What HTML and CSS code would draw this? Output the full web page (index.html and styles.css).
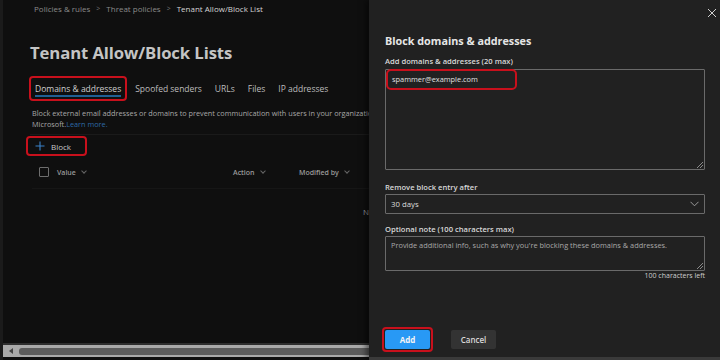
FILE: index.html
```html
<!DOCTYPE html>
<html>
<head>
<meta charset="utf-8">
<link rel="stylesheet" href="styles.css">
</head>
<body>
<div class="page">
  <div class="main">
    <div class="content">
      <div class="crumbs">
        <span>Policies &amp; rules</span><span class="sep">&gt;</span><span>Threat policies</span><span class="sep">&gt;</span><span class="cur">Tenant Allow/Block List</span>
      </div>
      <h1 class="title">Tenant Allow/Block Lists</h1>
      <div class="tabs">
        <div class="tab active"><span class="tab-label">Domains &amp; addresses</span></div>
        <div class="tab">Spoofed senders</div>
        <div class="tab">URLs</div>
        <div class="tab">Files</div>
        <div class="tab">IP addresses</div>
      </div>
      <p class="desc">Block external email addresses or domains to prevent communication with users in your organization and Microsoft.<br>Microsoft.<a class="link">Learn more.</a></p>
      <div class="toolbar">
        <div class="block-btn">
          <svg width="10" height="10" viewBox="0 0 10 10"><path d="M5 0.5V9.5M0.5 5H9.5" stroke="#3b82c9" stroke-width="1.1"/></svg>
          <span>Block</span>
        </div>
      </div>
      <div class="thead">
        <span class="check"></span>
        <span class="col c-value">Value <i class="chev"></i></span>
        <span class="col c-action">Action <i class="chev"></i></span>
        <span class="col c-mod">Modified by <i class="chev"></i></span>
      </div>
      <div class="empty-clip"><div class="empty">No items to show</div></div>
    </div>
    <div class="hscroll">
      <span class="arrow"></span>
      <span class="thumb"></span>
    </div>
  </div>
  <div class="panel">
    <div class="close">
      <svg width="10" height="10" viewBox="0 0 10 10"><path d="M1 1L9 9M9 1L1 9" stroke="#cfcfcf" stroke-width="1"/></svg>
    </div>
    <h2 class="ptitle">Block domains &amp; addresses</h2>
    <div class="label">Add domains &amp; addresses (20 max)</div>
    <div class="area big">
      <span class="entry">spammer@example.com</span>
      <span class="grip"></span>
    </div>
    <div class="label l2">Remove block entry after</div>
    <div class="select">
      <span>30 days</span>
      <svg width="9" height="6" viewBox="0 0 9 6"><path d="M0.5 0.8L4.5 4.8L8.5 0.8" stroke="#9a9a9a" stroke-width="1" fill="none"/></svg>
    </div>
    <div class="label l3">Optional note (100 characters max)</div>
    <div class="area note">
      <span class="ph">Provide additional info, such as why you're blocking these domains &amp; addresses.</span>
      <span class="grip"></span>
    </div>
    <div class="count">100 characters left</div>
    <div class="footer">
      <div class="add-wrap"><div class="btn primary">Add</div></div>
      <div class="btn secondary">Cancel</div>
    </div>
  </div>
</div>
</body>
</html>
```
FILE: styles.css
```css
* { box-sizing: border-box; }
html, body { margin: 0; padding: 0; }
body {
  background: #0f0f0f;
  font-family: "Open Sans", "Noto Sans", sans-serif;
  color: #c8c8c8;
}
.page {
  width: 720px;
  height: 360px;
  display: flex;
  overflow: hidden;
}
.main {
  width: 369px;
  flex: none;
  border-left: 3px solid #1b1b1b;
  background: #0f0f0f;
  display: flex;
  flex-direction: column;
  overflow: hidden;
}
.content {
  flex: 1;
  padding-left: 27px;
  white-space: nowrap;
}
.crumbs {
  font-size: 8px;
  color: #8a8a8a;
  margin-top: 3px;
  height: 12px;
  line-height: 12px;
  padding-left: 4px;
  display: flex;
  gap: 6px;
}
.crumbs .sep { color: #777; font-size: 7px; }
.crumbs .cur { color: #d4d4d4; }
.title {
  margin: 26px 0 0 0;
  font-size: 16.7px;
  font-weight: 700;
  line-height: 24px;
  height: 24px;
  color: #c4c4c4;
  letter-spacing: -0.1px;
}
.tabs {
  display: flex;
  align-items: center;
  margin-top: 11px;
  height: 25px;
  font-size: 8.5px;
  color: #bdbdbd;
}
.tab { margin-right: 13px; }
.tab.active {
  border: 2px solid #c8101c;
  border-radius: 4px;
  height: 25px;
  padding: 0 4px 0 4px;
  display: flex;
  align-items: center;
  margin-left: -1px;
  margin-right: 8px;
}
.tab-label {
  border-bottom: 2px solid #1f5f94;
  line-height: 12px;
  padding-top: 2px;
  color: #d0d0d0;
}
.desc {
  margin: 7px 0 0 0;
  font-size: 7.3px;
  line-height: 11px;
  color: #a8a8a8;
  padding-left: 2px;
  padding-bottom: 4px;
  border-bottom: 1px solid #1a1a1a;
  margin-right: -30px;
}
.link { color: #2e6aa6; }
.toolbar { padding-top: 1px; }
.block-btn {
  width: 61px;
  height: 20px;
  margin-left: -4px;
  border: 2px solid #c8101c;
  border-radius: 4px;
  display: flex;
  align-items: center;
  gap: 6px;
  padding-left: 7px;
  font-size: 8px;
  color: #c8c8c8;
}
.thead {
  display: flex;
  align-items: center;
  height: 33px;
  margin-left: 2px;
  font-size: 7px;
  font-weight: 600;
  color: #9a9a9a;
  border-bottom: 1px solid #161616;
  margin-right: -30px;
}
.check {
  width: 10px;
  height: 10px;
  border: 1px solid #6e6e6e;
  border-radius: 1px;
  margin-left: 7px;
  flex: none;
}
.col { display: flex; align-items: center; gap: 4px; }
.c-value { margin-left: 8px; width: 176px; }
.c-action { width: 66px; }
.chev {
  display: inline-block;
  width: 4px;
  height: 4px;
  border-right: 1px solid #666;
  border-bottom: 1px solid #666;
  transform: rotate(45deg);
  margin-top: -3px;
  margin-left: 2px;
}
.empty-clip {
  width: 339px;
  overflow: hidden;
  margin-top: 17px;
}
.empty {
  padding-left: 333px;
  font-size: 8px;
  color: #9a9a9a;
}
.hscroll {
  height: 14px;
  margin-bottom: 3px;
  background: #a9a9a9;
  border-top: 2px solid #2e2e2e;
  display: flex;
  align-items: center;
  padding: 0 0 0 6px;
  gap: 6px;
}
.arrow {
  width: 0; height: 0;
  border-top: 3px solid transparent;
  border-bottom: 3px solid transparent;
  border-right: 4px solid #444;
}
.thumb {
  flex: 1;
  height: 7px;
  background: #5c5c5c;
  border-radius: 3px 0 0 3px;
}
.panel {
  flex: 1;
  background: #212121;
  box-shadow: -3px 0 6px rgba(0,0,0,0.5);
  padding: 0 15px 0 16px;
  display: flex;
  flex-direction: column;
  border-bottom: 3px solid #3a3a3a;
  position: relative;
}
.close {
  align-self: flex-end;
  margin-top: 8px;
  margin-right: -12px;
  height: 10px;
  line-height: 0;
}
.ptitle {
  margin: 16px 0 0 0;
  font-size: 10.8px;
  font-weight: 700;
  color: #e6e6e6;
  line-height: 14px;
}
.label {
  margin-top: 8px;
  font-size: 7.6px;
  font-weight: 600;
  color: #d8d8d8;
  line-height: 10px;
}
.area {
  margin-top: 3px;
  border: 1px solid #6a6a6a;
  border-radius: 1px;
  position: relative;
}
.area.big { height: 101px; }
.entry {
  display: block;
  width: 131px;
  height: 21px;
  margin: -1px 0 0 0;
  border: 2px solid #c8101c;
  border-radius: 5px;
  padding: 3px 0 0 4px;
  font-size: 7.4px;
  color: #e0e0e0;
}
.grip {
  position: absolute;
  right: 1px;
  bottom: 1px;
  width: 6px;
  height: 6px;
  background: linear-gradient(135deg, transparent 45%, #8a8a8a 45%, #8a8a8a 55%, transparent 55%, transparent 70%, #8a8a8a 70%, #8a8a8a 80%, transparent 80%);
}
.label.l2 { margin-top: 12px; }
.select {
  margin-top: 2px;
  height: 20px;
  border: 1px solid #6a6a6a;
  border-radius: 1px;
  display: flex;
  align-items: center;
  justify-content: space-between;
  padding: 0 5px 0 5px;
  font-size: 7.8px;
  color: #dcdcdc;
}
.label.l3 { margin-top: 10px; }
.area.note {
  margin-top: 2px;
  height: 35px;
  padding: 3px 5px;
  font-size: 7.4px;
  color: #a8a8a8;
}
.count {
  text-align: right;
  font-size: 7px;
  color: #cfcfcf;
  margin-top: 0;
  line-height: 10px;
}
.footer {
  margin-top: auto;
  margin-bottom: 5px;
  display: flex;
  align-items: center;
  gap: 18px;
}
.add-wrap {
  margin-left: -3px;
  border: 2px solid #c8101c;
  border-radius: 4px;
  padding: 1px;
}
.btn {
  height: 19px;
  display: flex;
  align-items: center;
  justify-content: center;
  font-size: 8px;
  font-weight: 700;
  border-radius: 2px;
}
.btn.primary { width: 45px; background: #2899f5; color: #f4f4f4; }
.btn.secondary { width: 45px; background: #333333; color: #dadada; font-weight: 600; }
```
